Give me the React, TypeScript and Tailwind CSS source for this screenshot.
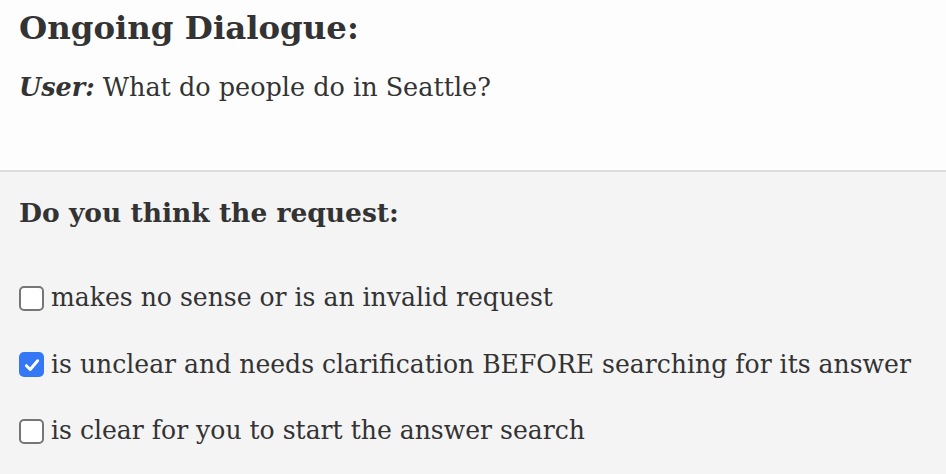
import { useState } from "react";

const options = [
  "makes no sense or is an invalid request",
  "is unclear and needs clarification BEFORE searching for its answer",
  "is clear for you to start the answer search",
];

function Box({ checked, onClick }: { checked: boolean; onClick: () => void }) {
  return (
    <button
      type="button"
      onClick={onClick}
      className={`flex h-[25px] w-[25px] shrink-0 items-center justify-center rounded-[5px] ${
        checked ? "bg-[#3478f6]" : "border-2 border-[#767676] bg-white"
      }`}
    >
      {checked ? (
        <svg viewBox="0 0 16 16" className="h-[18px] w-[18px]">
          <path d="M3 8.6 L6.4 12 L13 4.2" fill="none" stroke="white" strokeWidth="2.6" strokeLinecap="round" strokeLinejoin="round" />
        </svg>
      ) : null}
    </button>
  );
}

export default function App() {
  const [checked, setChecked] = useState([false, true, false]);

  return (
    <div className="min-h-screen bg-[#f4f4f4] font-['DejaVu_Serif',serif] text-[#333]">
      <section className="bg-[#fdfdfd] px-[19px] pb-[67px] pt-[8px]">
        <h1 className="text-[32.4px] font-bold leading-[40px]">Ongoing Dialogue:</h1>
        <p className="mt-[23px] text-[25.5px] leading-[32px]">
          <b className="italic">User:</b> What do people do in Seattle?
        </p>
      </section>
      <div className="h-[2px] bg-[#dddddd]" />
      <section className="px-[19px] pt-[23px]">
        <h2 className="text-[26.5px] font-bold leading-[36px]">Do you think the request:</h2>
        <div className="mt-[51px] flex flex-col gap-[34.5px]">
          {options.map((o, i) => (
            <label key={o} className="flex items-center gap-[7px] text-[25.1px] leading-[32px]">
              <Box checked={checked[i]} onClick={() => setChecked((p) => p.map((v, j) => (j === i ? !v : v)))} />
              <span>{o}</span>
            </label>
          ))}
        </div>
      </section>
    </div>
  );
}
